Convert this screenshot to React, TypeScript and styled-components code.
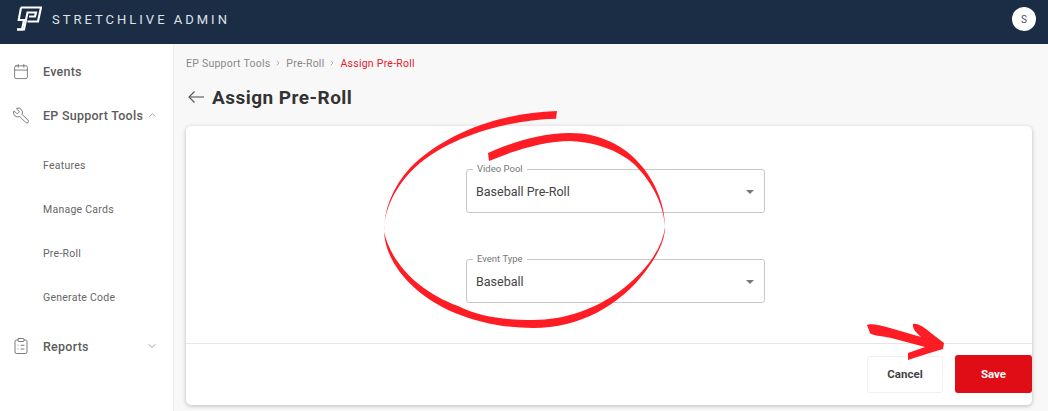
import React from "react";
import styled, { createGlobalStyle } from "styled-components";
import { Calendar, ChevronDown, ChevronRight, ChevronUp, ClipboardList, Wrench } from "lucide-react";

const GlobalStyle = createGlobalStyle`
  html, body { margin: 0; padding: 0; height: 100%; overflow: hidden; }
  body { font-family: "Roboto", "Liberation Sans", sans-serif; background: #fff; }
`;

function Logo() {
  return (
    <svg width="26" height="26" viewBox="16 6 26 26" fill="none" stroke="#fff" strokeWidth="2.1" strokeLinejoin="miter">
      <path d="M21 7.5H41L38 21.5H27.5" />
      <path d="M21 7.5L18.7 20H24L22 29.5H17" />
      <path d="M17 29.5H24L27.5 12.5H36L35 16.5H29" />
    </svg>
  );
}

function BackArrow() {
  return (
    <svg width="16" height="12" viewBox="0 0 16 12" fill="none" stroke="#555" strokeWidth="1.1">
      <path d="M16 6H1" />
      <path d="M6.5 .5L1 6L6.5 11.5" />
    </svg>
  );
}

function App() {
  return (
    <Page>
      <GlobalStyle />
      <Header>
        <Brand>
          <Logo />
          <BrandText>STRETCHLIVE ADMIN</BrandText>
        </Brand>
        <Avatar>S</Avatar>
      </Header>
      <Body>
        <Sidebar>
          <NavItem>
            <Calendar size={17} strokeWidth={1.1} />
            <NavLabel>Events</NavLabel>
          </NavItem>
          <NavItem>
            <FlippedIcon>
              <Wrench size={19} strokeWidth={1.1} />
            </FlippedIcon>
            <NavLabel>EP Support Tools</NavLabel>
            <ChevronUp size={12} strokeWidth={1.2} />
          </NavItem>
          <SubList>
            <SubItem>Features</SubItem>
            <SubItem>Manage Cards</SubItem>
            <SubItem>Pre-Roll</SubItem>
            <SubItem>Generate Code</SubItem>
          </SubList>
          <NavItem $spread>
            <ClipboardList size={18} strokeWidth={1.1} />
            <NavLabel>Reports</NavLabel>
            <ChevronDown size={12} strokeWidth={1.2} />
          </NavItem>
        </Sidebar>
        <Main>
          <Crumbs>
            <span>EP Support Tools</span>
            <ChevronRight size={8} strokeWidth={1.8} />
            <span>Pre-Roll</span>
            <ChevronRight size={8} strokeWidth={1.8} />
            <CrumbActive>Assign Pre-Roll</CrumbActive>
          </Crumbs>
          <TitleRow>
            <BackArrow />
            <Title>Assign Pre-Roll</Title>
          </TitleRow>
          <Card>
            <FormArea>
              <Field>
                <FieldLabel>Video Pool</FieldLabel>
                <FieldValue>Baseball Pre-Roll</FieldValue>
                <Caret />
              </Field>
              <Field>
                <FieldLabel>Event Type</FieldLabel>
                <FieldValue>Baseball</FieldValue>
                <Caret />
              </Field>
            </FormArea>
            <Footer>
              <CancelButton>Cancel</CancelButton>
              <SaveButton>Save</SaveButton>
            </Footer>
          </Card>
        </Main>
      </Body>
      <Markup width="1048" height="411" viewBox="0 0 1048 411">
        <path
          fill="#ff1d25"
          d="M557 111C500 113 445 133 410 168C392 188 384 210 384 232C386 265 415 296 455 313C480 323 505 328 533 328C580 328 620 305 645 272C658 255 665 240 665 227C665 195 645 160 615 144C600 136 585 133 570 133C540 133 510 143 488 153L489 161C515 150 545 141 570 141C595 142 618 150 634 164C652 182 664 205 665 227C662 250 645 272 620 291C595 309 565 320 533 320C505 320 480 317 458 306C420 292 392 265 384 232C384 205 400 180 420 163C452 137 505 120 556 118.7Z"
        />
        <path
          fill="#ff1d25"
          d="M867 325C870 323 880 325 890 328L921 337C917 333 912 329 913 324C918 323 925 328 931 333L944 343L943 349C932 352 920 356 908 360L908 353L925 347L895 339C885 336 872 336 870 333Z"
        />
      </Markup>
    </Page>
  );
}

export default App;

const Page = styled.div`
  position: relative;
  width: 1048px;
  height: 411px;
  overflow: hidden;
`;

const Header = styled.header`
  height: 44px;
  background: #1b2d45;
  display: flex;
  align-items: flex-start;
  justify-content: space-between;
  padding: 6px 12px 0 16px;
  box-sizing: border-box;
`;

const Brand = styled.div`
  display: flex;
  align-items: center;
  gap: 10px;
`;

const BrandText = styled.div`
  font-size: 13px;
  letter-spacing: 3px;
  color: #dfe3e8;
`;

const Avatar = styled.div`
  width: 24px;
  height: 24px;
  margin-top: 1px;
  border-radius: 50%;
  background: #fff;
  color: #44505f;
  font-size: 10px;
  display: flex;
  align-items: center;
  justify-content: center;
`;

const Body = styled.div`
  display: flex;
  height: 367px;
`;

const Sidebar = styled.nav`
  width: 174px;
  flex: none;
  box-sizing: border-box;
  border-right: 1px solid #ececec;
  background: #fff;
  padding-top: 5px;
  color: #5f5f5f;
`;

const NavItem = styled.div<{ $spread?: boolean }>`
  display: flex;
  align-items: center;
  height: 44px;
  padding: 0 15px 0 12px;
  & > svg:first-child,
  & > span:first-child {
    width: 18px;
    flex: none;
    margin-right: 13px;
  }
  & > span:nth-child(2) {
    flex: ${(p) => (p.$spread ? 1 : "none")};
  }
  & > svg:last-child:not(:first-child) {
    margin-left: 4px;
  }
`;

const FlippedIcon = styled.span`
  display: flex;
  transform: scaleX(-1);
`;

const NavLabel = styled.span`
  font-size: 12.5px;
  font-weight: 500;
  letter-spacing: 0.25px;
  color: #5c5c5c;
`;

const SubList = styled.div`
  display: flex;
  flex-direction: column;
  margin: 6px 0 5px;
`;

const SubItem = styled.div`
  height: 44px;
  display: flex;
  align-items: center;
  padding-left: 43px;
  font-size: 10.5px;
  letter-spacing: 0.25px;
  color: #666;
`;

const Main = styled.main`
  flex: 1;
  background: #f8f8f8;
  padding: 12px 16px 6px 12px;
  box-sizing: border-box;
  display: flex;
  flex-direction: column;
`;

const Crumbs = styled.div`
  display: flex;
  align-items: center;
  gap: 4px;
  font-size: 10.5px;
  letter-spacing: 0.25px;
  color: #888;
  height: 14px;
`;

const CrumbActive = styled.span`
  color: #e8192c;
`;

const TitleRow = styled.div`
  display: flex;
  align-items: center;
  gap: 8px;
  margin-top: 14px;
  padding-left: 2px;
  height: 26px;
`;

const Title = styled.h1`
  margin: 0;
  font-size: 19px;
  font-weight: 700;
  color: #333;
  letter-spacing: 0.47px;
`;

const Card = styled.section`
  margin-top: 16px;
  flex: 1;
  background: #fff;
  border-radius: 5px;
  box-shadow: 0 1px 4px rgba(0, 0, 0, 0.25);
  display: flex;
  flex-direction: column;
`;

const FormArea = styled.div`
  height: 218px;
  box-sizing: border-box;
  padding: 43px 0 0 13px;
  display: flex;
  flex-direction: column;
  align-items: center;
  gap: 46px;
  border-bottom: 1px solid #e6e6e6;
`;

const Field = styled.div`
  position: relative;
  width: 299px;
  height: 44px;
  box-sizing: border-box;
  border: 1px solid #c8c8c8;
  border-radius: 3px;
  display: flex;
  align-items: center;
  padding-left: 9px;
`;

const FieldLabel = styled.label`
  position: absolute;
  top: -7px;
  left: 6px;
  padding: 0 4px;
  background: #fff;
  font-size: 9.5px;
  line-height: 11px;
  color: #777;
`;

const FieldValue = styled.div`
  font-size: 12.5px;
  color: #444;
`;

const Caret = styled.span`
  position: absolute;
  right: 10px;
  top: 20px;
  border-left: 4.5px solid transparent;
  border-right: 4.5px solid transparent;
  border-top: 4.5px solid #777;
`;

const Footer = styled.div`
  flex: 1;
  display: flex;
  justify-content: flex-end;
  align-items: center;
  gap: 12px;
  padding-bottom: 1px;
`;

const CancelButton = styled.button`
  width: 76px;
  height: 37px;
  background: #fff;
  border: 1px solid #f0f0f0;
  border-radius: 3px;
  font-family: inherit;
  font-size: 11.5px;
  font-weight: 700;
  color: #444;
`;

const SaveButton = styled.button`
  width: 77px;
  height: 38px;
  background: #e00c16;
  border: none;
  border-radius: 3px;
  font-family: inherit;
  font-size: 11.5px;
  font-weight: 700;
  color: #fff;
`;

const Markup = styled.svg`
  position: absolute;
  inset: 0;
  pointer-events: none;
`;
